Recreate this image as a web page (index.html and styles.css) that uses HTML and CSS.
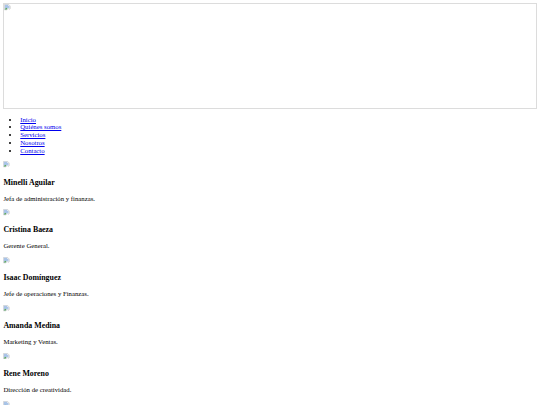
FILE: index.html
```html
<!DOCTYPE html>
<html lang="es">
<head>
    <meta charset="UTF-8">
    <meta name="viewport" content="width=device-width, initial-scale=1.0">
    <title>Nosotros</title>
    <link rel="stylesheet" href="styles.css">
</head>
<body>
    <header class="banner">
        <svg class="broken" viewBox="0 0 16 16" aria-hidden="true">
            <path d="M1 1h10l4 4v6l-3 2-2-2-3 3H1z" fill="#f2f2f2" stroke="#b5b5b5"/>
            <path d="M2 2h8v3h3v5l-1 1-2-2-4 4H2z" fill="#a9c4e8"/>
            <path d="M2 13l3-4 3 2-2 2z" fill="#5aa84a"/>
        </svg>
    </header>

    <nav>
        <ul class="menu">
            <li><a href="#">Inicio</a></li>
            <li><a href="#">Quiénes somos</a></li>
            <li><a href="#">Servicios</a></li>
            <li><a href="#">Nosotros</a></li>
            <li><a href="#">Contacto</a></li>
        </ul>
    </nav>

    <section class="team">
        <div class="member">
            <div class="photo"><svg class="broken" viewBox="0 0 16 16" aria-hidden="true"><path d="M1 1h10l4 4v6l-3 2-2-2-3 3H1z" fill="#f2f2f2" stroke="#b5b5b5"/><path d="M2 2h8v3h3v5l-1 1-2-2-4 4H2z" fill="#a9c4e8"/><path d="M2 13l3-4 3 2-2 2z" fill="#5aa84a"/></svg></div>
            <h3>Minelli Aguilar</h3>
            <p>Jefa de administración y finanzas.</p>
        </div>
        <div class="member">
            <div class="photo"><svg class="broken" viewBox="0 0 16 16" aria-hidden="true"><path d="M1 1h10l4 4v6l-3 2-2-2-3 3H1z" fill="#f2f2f2" stroke="#b5b5b5"/><path d="M2 2h8v3h3v5l-1 1-2-2-4 4H2z" fill="#a9c4e8"/><path d="M2 13l3-4 3 2-2 2z" fill="#5aa84a"/></svg></div>
            <h3>Cristina Baeza</h3>
            <p>Gerente General.</p>
        </div>
        <div class="member">
            <div class="photo"><svg class="broken" viewBox="0 0 16 16" aria-hidden="true"><path d="M1 1h10l4 4v6l-3 2-2-2-3 3H1z" fill="#f2f2f2" stroke="#b5b5b5"/><path d="M2 2h8v3h3v5l-1 1-2-2-4 4H2z" fill="#a9c4e8"/><path d="M2 13l3-4 3 2-2 2z" fill="#5aa84a"/></svg></div>
            <h3>Isaac Domínguez</h3>
            <p>Jefe de operaciones y Finanzas.</p>
        </div>
        <div class="member">
            <div class="photo"><svg class="broken" viewBox="0 0 16 16" aria-hidden="true"><path d="M1 1h10l4 4v6l-3 2-2-2-3 3H1z" fill="#f2f2f2" stroke="#b5b5b5"/><path d="M2 2h8v3h3v5l-1 1-2-2-4 4H2z" fill="#a9c4e8"/><path d="M2 13l3-4 3 2-2 2z" fill="#5aa84a"/></svg></div>
            <h3>Amanda Medina</h3>
            <p>Marketing y Ventas.</p>
        </div>
        <div class="member">
            <div class="photo"><svg class="broken" viewBox="0 0 16 16" aria-hidden="true"><path d="M1 1h10l4 4v6l-3 2-2-2-3 3H1z" fill="#f2f2f2" stroke="#b5b5b5"/><path d="M2 2h8v3h3v5l-1 1-2-2-4 4H2z" fill="#a9c4e8"/><path d="M2 13l3-4 3 2-2 2z" fill="#5aa84a"/></svg></div>
            <h3>Rene Moreno</h3>
            <p>Dirección de creatividad.</p>
        </div>
        <div class="member">
            <div class="photo"><svg class="broken" viewBox="0 0 16 16" aria-hidden="true"><path d="M1 1h10l4 4v6l-3 2-2-2-3 3H1z" fill="#f2f2f2" stroke="#b5b5b5"/><path d="M2 2h8v3h3v5l-1 1-2-2-4 4H2z" fill="#a9c4e8"/><path d="M2 13l3-4 3 2-2 2z" fill="#5aa84a"/></svg></div>
        </div>
    </section>
</body>
</html>
```

FILE: styles.css
```css
/* pagina sin estilos, vista al 42% */
html {
    background: #fff;
}
body {
    margin: 3.375px;
    font-family: "Liberation Serif", "Times New Roman", serif;
    font-size: 6.75px;
    line-height: 7.76px;
    color: #000;
}
.banner {
    box-sizing: border-box;
    width: 100%;
    height: 105.5px;
    border: 1px solid #dcdcdc;
    line-height: 0;
}
.broken {
    width: 6.75px;
    height: 6.75px;
}
.menu {
    margin: 6.75px 0;
    padding-left: 16.875px;
}
.menu a {
    color: #0000ee;
}
.photo .broken {
    vertical-align: baseline;
}
.member h3 {
    font-size: 1.17em;
    line-height: 9.07px;
    margin: 1em 0;
}
.member p {
    margin: 1em 0;
}
```
